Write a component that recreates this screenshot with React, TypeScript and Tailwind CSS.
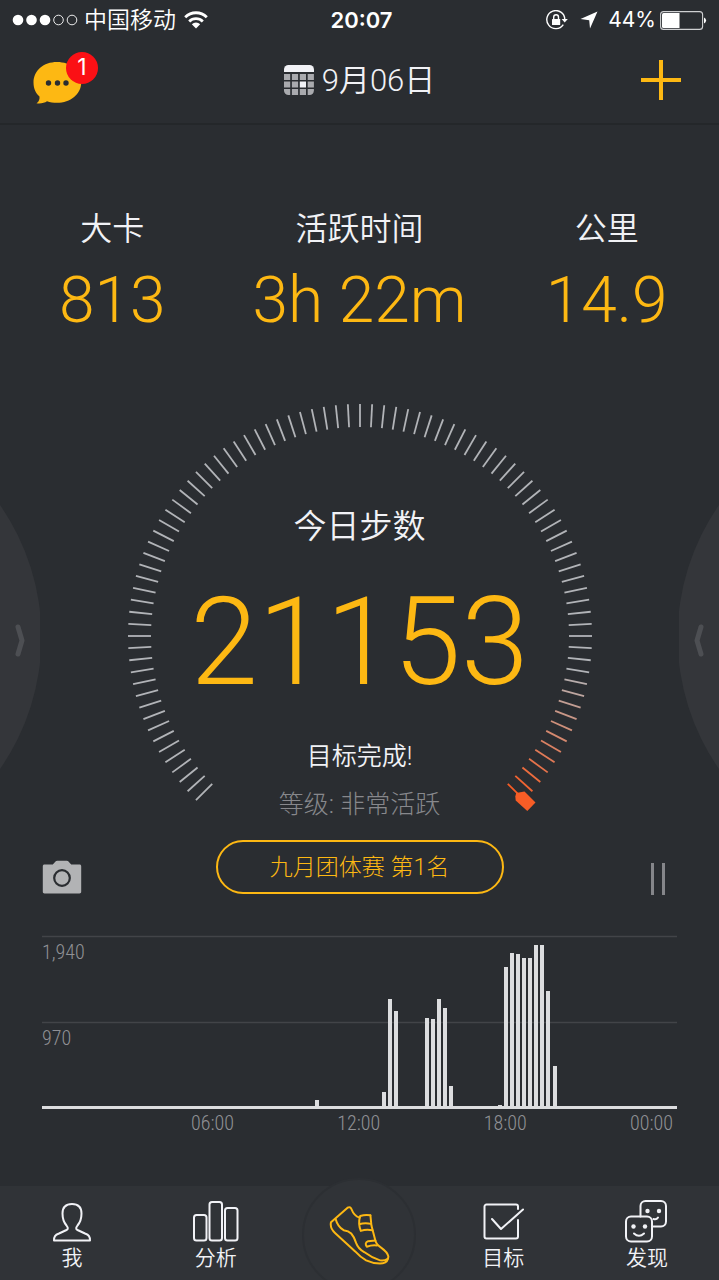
import type { ReactNode } from "react";

const TICK_STEP = 3;
const TICK_COUNT = 90;
const FADE_COUNT = 12;

const stats = [
  { label: "大卡", value: "813" },
  { label: "活跃时间", value: "3h 22m" },
  { label: "公里", value: "14.9" },
];

// x is the left edge inside the 635 wide chart, h the height above the axis
const bars = [
  { x: 273, h: 6 },
  { x: 340, h: 14 },
  { x: 346, h: 107 },
  { x: 352, h: 95 },
  { x: 383, h: 88 },
  { x: 389, h: 87 },
  { x: 395, h: 107 },
  { x: 401, h: 98 },
  { x: 407, h: 20 },
  { x: 456, h: 1 },
  { x: 462, h: 139 },
  { x: 468, h: 153 },
  { x: 474, h: 152 },
  { x: 480, h: 148 },
  { x: 486, h: 148 },
  { x: 492, h: 161 },
  { x: 498, h: 161 },
  { x: 504, h: 115 },
  { x: 511, h: 40 },
];

const hours = ["06:00", "12:00", "18:00", "00:00"];

export default function App() {
  return (
    <div className="flex min-h-screen flex-col overflow-hidden bg-[#2a2d31] font-['Roboto','Noto_Sans_CJK_SC',sans-serif] text-[#f1f2f6]">
      <StatusBar />
      <Header />

      <main className="relative flex flex-1 flex-col">
        <SideHandle side="left" />
        <SideHandle side="right" />

        <dl className="mt-20 grid grid-cols-[5fr_6fr_5fr] text-center">
          {stats.map((stat) => (
            <div key={stat.label}>
              <dt className="text-[32px] leading-12 font-[350]">{stat.label}</dt>
              <dd className="mt-2 text-[64px] leading-20 font-light whitespace-nowrap text-[#fdb813]">
                {stat.value}
              </dd>
            </div>
          ))}
        </dl>

        <Gauge />

        <div className="mt-4 grid grid-cols-[1fr_auto_1fr] items-center">
          <button type="button" aria-label="相机" className="ml-10.5 mt-5 w-10">
            <CameraIcon />
          </button>
          <button
            type="button"
            className="h-[54px] w-72 rounded-full border-2 border-[#fdb813] pt-0.5 text-[23px] font-light text-[#fdb813]"
          >
            九月团体赛 第1名
          </button>
          <button
            type="button"
            aria-label="暂停"
            className="mr-13 mt-6 flex h-8 gap-2 justify-self-end"
          >
            <span className="w-[3px] bg-[#85868a]" />
            <span className="mr-0.5 w-[3px] bg-[#85868a]" />
          </button>
        </div>

        <StepChart />
      </main>

      <TabBar />
    </div>
  );
}

function StatusBar() {
  return (
    <div className="grid h-10 grid-cols-[1fr_auto_1fr] items-center px-3 font-['Inter','Noto_Sans_CJK_SC',sans-serif] text-white">
      <div className="flex items-center">
        <svg viewBox="0 0 66 12" className="h-3 w-[66px]" aria-hidden="true">
          <circle cx="6" cy="6" r="5.3" fill="#fff" />
          <circle cx="19.5" cy="6" r="5.3" fill="#fff" />
          <circle cx="33" cy="6" r="5.3" fill="#fff" />
          <circle cx="46.5" cy="6" r="4.8" fill="none" stroke="#fff" strokeWidth="0.9" />
          <circle cx="60" cy="6" r="4.8" fill="none" stroke="#fff" strokeWidth="0.9" />
        </svg>
        <span className="ml-1.5 text-[23px] leading-8 font-[350]">中国移动</span>
        <svg viewBox="0 0 24 18" className="ml-2 h-[18px] w-6" aria-hidden="true">
          <g fill="none" stroke="#fff" strokeWidth="2.8">
            <path d="M1.2 6.2a15.3 15.3 0 0 1 21.6 0" />
            <path d="M5.2 10.4a9.6 9.6 0 0 1 13.6 0" />
          </g>
          <path d="M7.8 13.2a6 6 0 0 1 8.4 0L12 17.6z" fill="#fff" />
        </svg>
      </div>
      <span className="pl-1 text-[22px] font-semibold">20:07</span>
      <div className="flex items-center justify-end">
        <svg viewBox="0 0 22 20" className="h-5 w-[22px]" aria-hidden="true">
          <path
            d="M17.3 14.6a9 9 0 1 1 1.5-5.2"
            fill="none"
            stroke="#fff"
            strokeWidth="1.4"
          />
          <path d="M15.6 9h6.2l-3.1 3.4z" fill="#fff" />
          <rect x="6" y="9" width="8.2" height="6" rx="0.6" fill="#fff" />
          <path d="M7.7 9V7.2a2.4 2.4 0 0 1 4.8 0V9" fill="none" stroke="#fff" strokeWidth="1.4" />
        </svg>
        <svg viewBox="0 0 18 18" className="ml-3 h-[18px] w-[18px]" aria-hidden="true">
          <path d="M17.5 0.5L10 17.5 9.2 9.2 0.5 8z" fill="#fff" />
        </svg>
        <span className="ml-2.5 text-[21px]">44%</span>
        <svg viewBox="0 0 47 19" className="ml-1 h-[19px] w-[47px]" aria-hidden="true">
          <rect x="0.6" y="0.6" width="42" height="17.8" rx="3" fill="none" stroke="#cfd0d2" strokeWidth="1.1" />
          <path d="M19.5 2H3.5A1.5 1.5 0 0 0 2 3.5v12A1.5 1.5 0 0 0 3.5 17h16z" fill="#fff" />
          <path d="M44 6.5a3.2 3.2 0 0 1 0 6z" fill="#fff" />
        </svg>
      </div>
    </div>
  );
}

function Header() {
  return (
    <header className="grid h-[85px] grid-cols-[1fr_auto_1fr] items-center border-b-2 border-[#24272a] px-8">
      <button type="button" aria-label="消息" className="relative w-16 pb-2">
        <svg viewBox="0 0 66 56" className="h-14 w-[66px]" aria-hidden="true">
          <path
            d="M25 12C11.500 12 1.500 20.500 1.500 32.500 1.500 39 4 43.500 7.500 46.500 7.800 49.500 7 51.500 4.500 53.300c4.500.6 8-.4 10.500-2 3 1 6.500 1.500 10 1.500 13.500 0 24.200-8.800 24.200-20.300C49.200 20.500 38.500 12 25 12z"
            fill="#fdb813"
          />
          <g fill="#2a2d31">
            <circle cx="16.500" cy="33" r="2.700" />
            <circle cx="25.500" cy="33" r="2.700" />
            <circle cx="34" cy="33" r="2.700" />
          </g>
        </svg>
        <span className="absolute top-0.5 -right-0.5 flex size-8 items-center justify-center rounded-full bg-[#fb1015] font-['Inter'] text-[23px] text-white">
          1
        </span>
      </button>
      <button type="button" className="flex items-center gap-2 text-[31px]">
        <svg viewBox="0 0 30 30" className="mb-1 size-[30px]" aria-hidden="true">
          <clipPath id="calendar">
            <rect width="30" height="30" rx="4.500" />
          </clipPath>
          <g clipPath="url(#calendar)">
            <rect width="30" height="7" fill="#f1f2f6" />
            {[0, 1, 2].map((row) =>
              [0, 1, 2, 3].map((col) => (
                <rect
                  key={`${row}-${col}`}
                  x={col * 7.9}
                  y={9 + row * 7.5}
                  width="6.200"
                  height="6"
                  fill={row === 1 && col === 2 ? "#f1f2f6" : "#a9aaae"}
                />
              ))
            )}
          </g>
        </svg>
        <span className="font-[350]">9月06日</span>
      </button>
      <button type="button" aria-label="添加" className="mr-1.5 mb-1 justify-self-end">
        <svg viewBox="0 0 40 40" className="size-10" aria-hidden="true">
          <path d="M20 0v40M0 20h40" stroke="#fdb813" strokeWidth="4" />
        </svg>
      </button>
    </header>
  );
}

function SideHandle({ side }: { side: "left" | "right" }) {
  const left = side === "left";

  return (
    <button
      type="button"
      aria-label={left ? "前一天" : "后一天"}
      className={`absolute top-[380px] h-[264px] w-10 ${left ? "left-0" : "right-0 -scale-x-100"}`}
    >
      <svg viewBox="0 0 40 264" className="h-full w-full" aria-hidden="true">
        <path d="M0 0a231 231 0 0 1 0 264z" fill="#34363a" />
        <path
          d="M18 122L22 135.500 18 149"
          fill="none"
          stroke="#4d4f53"
          strokeWidth="5"
          strokeLinecap="round"
          strokeLinejoin="round"
        />
      </svg>
    </button>
  );
}

function tickColor(index: number) {
  const t = Math.max(0, (index - (TICK_COUNT - FADE_COUNT)) / FADE_COUNT);
  const mix = (from: number, to: number) => Math.round(from + (to - from) * t);

  return `rgb(${mix(178, 247)}, ${mix(180, 93)}, ${mix(184, 38)})`;
}

function Gauge() {
  return (
    <section className="mt-15.5 grid justify-center text-center">
      <svg viewBox="0 0 466 410" className="col-start-1 row-start-1 w-[466px]" aria-hidden="true">
        {Array.from({ length: TICK_COUNT + 1 }, (_, i) => (
          <line
            key={i}
            x1="233"
            x2="233"
            y1={i === TICK_COUNT ? 10 : 1}
            y2="24"
            stroke={tickColor(i)}
            strokeWidth="1.800"
            transform={`rotate(${i * TICK_STEP - 135} 233 233)`}
          />
        ))}
        <path d="M388.300 393.500l.9-3.500 8.300-1.500L408.500 399.500l-8.200 8.500L388.700 397.500z" fill="#f75d26" />
      </svg>

      <div className="col-start-1 row-start-1 pt-25">
        <h1 className="text-[33px] leading-12 font-[350]">今日步数</h1>
        <p className="mt-5 text-[122px] leading-36 font-light text-[#fdb813]">21153</p>
        <p className="mt-6 text-[25px] leading-9 font-[350]">目标完成!</p>
        <p className="mt-3 text-[25px] leading-9 font-light text-[#87888c]">等级: 非常活跃</p>
      </div>
    </section>
  );
}

function CameraIcon() {
  return (
    <svg viewBox="0 0 40 34" className="h-[34px] w-10" aria-hidden="true">
      <path
        d="M2.500 4.500h8.300L13.500 1.600C14 1 14.500.8 15.200.8h9.600c.7 0 1.200.2 1.700.8l2.700 2.900h8.300c1 0 1.700.7 1.700 1.700v25.600c0 1-.7 1.700-1.700 1.700h-35c-1 0-1.700-.7-1.700-1.700V6.200c0-1 .7-1.700 1.700-1.700z"
        fill="#b2b3b5"
      />
      <circle cx="20" cy="18" r="7.800" fill="none" stroke="#2a2d31" strokeWidth="2.200" />
    </svg>
  );
}

function StepChart() {
  return (
    <section className="mx-10.5 mt-10 font-['Roboto_Condensed','Roboto',sans-serif] font-light text-[#909195]">
      <svg viewBox="0 0 635 174" className="w-full" role="img" aria-label="步数图表">
        <path d="M0 1.500h635M0 87.500h635" stroke="#424448" strokeWidth="1.500" />
        {bars.map((bar) => (
          <rect key={bar.x} x={bar.x} y={171 - bar.h} width="4" height={bar.h} fill="#dcdddf" />
        ))}
        <rect y="171" width="635" height="3" fill="#dcdddf" />
        <text x="0" y="24" fontSize="20" fill="currentColor">
          1,940
        </text>
        <text x="0" y="110" fontSize="20" fill="currentColor">
          970
        </text>
      </svg>
      <div className="mt-0.5 flex justify-between pr-1 pl-[149px] text-[20px] leading-6">
        {hours.map((hour) => (
          <span key={hour}>{hour}</span>
        ))}
      </div>
    </section>
  );
}

function TabBar() {
  return (
    <nav className="relative grid h-[94px] grid-cols-5 bg-[#303337]">
      <Tab label="我">
        <path d="M13.500 29c2-1 1.500-2.500 0-4.500-3-3.500-4-7.500-4-12C9.500 6 13.500 3 19 3s9.500 3 9.500 9.500c0 4.500-1 8.500-4 12-1.500 2-2 3.500 0 4.500l7.500 3.500c4 1.500 5 3 5 7H1c0-4 1-5.500 5-7z" />
      </Tab>
      <Tab label="分析">
        <rect x="-3" y="14" width="12.500" height="25.500" rx="2.500" />
        <rect x="12.500" y="1" width="12.500" height="38.500" rx="2.500" />
        <rect x="28" y="7" width="12.500" height="32.500" rx="2.500" />
      </Tab>
      <a
        href="#today"
        aria-label="今日"
        className="-mt-2 flex size-[114px] items-center justify-center justify-self-center rounded-full border-2 border-[#2c2f33] bg-[#303337]"
      >
        <svg
          viewBox="146 130 184 184"
          className="size-[61px]"
          fill="none"
          stroke="#fdb813"
          strokeWidth="6"
          strokeLinecap="round"
          strokeLinejoin="round"
          aria-hidden="true"
        >
          <path d="M152 182L202 138Q211 133 215 145 221 162 238 168M271 162L274 192 286 238Q289 250 305 260 322 272 325 285 325 301 308 306 281 308 258 297 240 287 225 270L165 215Q148 200 152 182" />
          <path d="M166 172Q172 195 190 206 205 208 213 216 222 226 228 245 234 262 252 272 276 290 300 297 314 299 323 292" />
          <path d="M240 163Q256 158 271 161M240 163Q233 186 242 208 258 202 277 206M237 188Q255 182 273 187" />
          <path d="M286 237L264 239Q252 244 260 256 275 250 291 252" />
        </svg>
      </a>
      <Tab label="目标">
        <path d="M34 8V5.500a2 2 0 0 0-2-2H2.500a2 2 0 0 0-2 2v30a2 2 0 0 0 2 2H32a2 2 0 0 0 2-2V19" />
        <path d="M8 18l9 10L39 8.500" />
      </Tab>
      <Tab label="发现">
        <path d="M12.500 15.500V5a5 5 0 0 1 5-5H33a5 5 0 0 1 5 5v15.500a5 5 0 0 1-5 5h-7.500" />
        <rect x="-2" y="15.500" width="26" height="25" rx="5" />
        <path d="M6 32.500q5 4.500 10 0M25.500 18q3 1 4.500-1.500" />
        <g fill="currentColor" stroke="none">
          <circle cx="5.500" cy="25.500" r="2.200" />
          <circle cx="17" cy="25.500" r="2.200" />
          <circle cx="19.500" cy="10" r="2.200" />
          <circle cx="31" cy="10" r="2.200" />
        </g>
      </Tab>
    </nav>
  );
}

function Tab({ label, children }: { label: string; children: ReactNode }) {
  return (
    <a
      href={`#${label}`}
      className="flex flex-col items-center pt-3.5 text-[21px] leading-7 font-[350]"
    >
      <svg
        viewBox="-5 -1 48 44"
        className="h-11 w-12"
        fill="none"
        stroke="currentColor"
        strokeWidth="2"
        strokeLinecap="round"
        strokeLinejoin="round"
        aria-hidden="true"
      >
        {children}
      </svg>
      <span>{label}</span>
    </a>
  );
}
